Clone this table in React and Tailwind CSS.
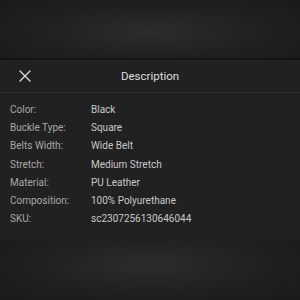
import React from 'react';

const specs = [
  ['Color:', 'Black'],
  ['Buckle Type:', 'Square'],
  ['Belts Width:', 'Wide Belt'],
  ['Stretch:', 'Medium Stretch'],
  ['Material:', 'PU Leather'],
  ['Composition:', '100% Polyurethane'],
  ['SKU:', 'sc2307256130646044'],
];

export default function App() {
  return (
    <div className="w-[300px] h-[300px] flex flex-col bg-[#1b1b1b] font-['Roboto',sans-serif] overflow-hidden">
      <div className="h-[58px] shrink-0 bg-[radial-gradient(ellipse_at_50%_55%,#2c2c2c_0%,#1f1f1f_60%,#1a1a1a_100%)]" />
      <div className="h-[2px] shrink-0 bg-[#141414]" />
      <div className="bg-[#212121] flex flex-col">
        <div className="h-[33px] flex items-center relative border-b border-[#2d2d2d]">
          <svg className="absolute left-[19px] top-[10px]" width="12" height="12" viewBox="0 0 12 12" fill="none" stroke="#e0e0e0" strokeWidth="1.3" strokeLinecap="round">
            <path d="M1 1L11 11M11 1L1 11" />
          </svg>
          <div className="w-full text-center pt-[2px] text-[11.5px] text-[#dedede]">Description</div>
        </div>
        <div className="pt-[7px] pb-[13px] px-[10px] flex flex-col">
          {specs.map(([k, v]) => (
            <div key={k} className="flex h-[18.3px] items-center text-[10px]">
              <span className="w-[81px] text-[#a8a8a8]">{k}</span>
              <span className="text-[#c8c8c8]">{v}</span>
            </div>
          ))}
        </div>
      </div>
      <div className="flex-1 bg-[radial-gradient(ellipse_at_50%_40%,#2c2c2c_0%,#1f1f1f_60%,#1a1a1a_100%)]" />
    </div>
  );
}
